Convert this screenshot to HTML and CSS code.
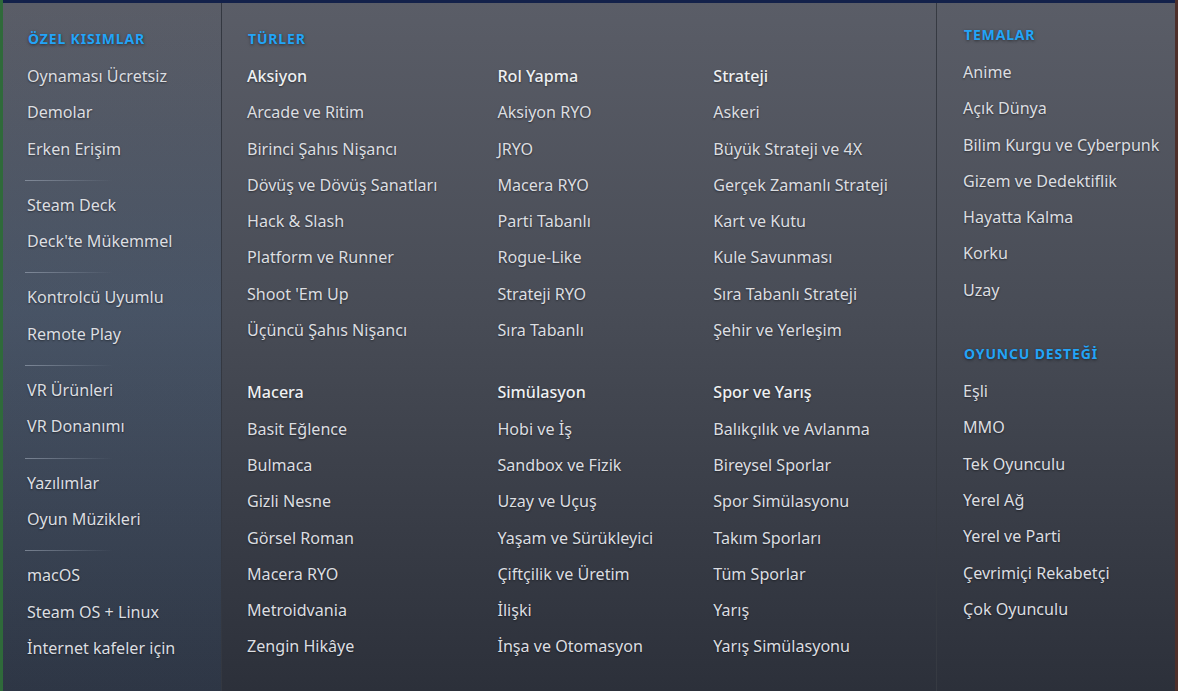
FILE: index.html
```html
<!DOCTYPE html>
<html lang="tr">
<head>
<meta charset="utf-8">
<title>Kategoriler</title>
<link rel="stylesheet" href="styles.css">
</head>
<body>
<div class="stage">
  <div class="menu">
    <div class="col col-special">
      <div class="head">Özel Kısımlar</div>
      <a class="item">Oynaması Ücretsiz</a>
      <a class="item">Demolar</a>
      <a class="item">Erken Erişim</a>
      <div class="sep"></div>
      <a class="item">Steam Deck</a>
      <a class="item">Deck'te Mükemmel</a>
      <div class="sep"></div>
      <a class="item">Kontrolcü Uyumlu</a>
      <a class="item">Remote Play</a>
      <div class="sep"></div>
      <a class="item">VR Ürünleri</a>
      <a class="item">VR Donanımı</a>
      <div class="sep"></div>
      <a class="item">Yazılımlar</a>
      <a class="item">Oyun Müzikleri</a>
      <div class="sep"></div>
      <a class="item">macOS</a>
      <a class="item">Steam OS + Linux</a>
      <a class="item">İnternet kafeler için</a>
    </div>

    <div class="col col-genres">
      <div class="head">Türler</div>
      <div class="genre-grid">
        <div class="group">
          <a class="item title">Aksiyon</a>
          <a class="item">Arcade ve Ritim</a>
          <a class="item">Birinci Şahıs Nişancı</a>
          <a class="item">Dövüş ve Dövüş Sanatları</a>
          <a class="item">Hack &amp; Slash</a>
          <a class="item">Platform ve Runner</a>
          <a class="item">Shoot 'Em Up</a>
          <a class="item">Üçüncü Şahıs Nişancı</a>
        </div>
        <div class="group">
          <a class="item title">Rol Yapma</a>
          <a class="item">Aksiyon RYO</a>
          <a class="item">JRYO</a>
          <a class="item">Macera RYO</a>
          <a class="item">Parti Tabanlı</a>
          <a class="item">Rogue-Like</a>
          <a class="item">Strateji RYO</a>
          <a class="item">Sıra Tabanlı</a>
        </div>
        <div class="group">
          <a class="item title">Strateji</a>
          <a class="item">Askeri</a>
          <a class="item">Büyük Strateji ve 4X</a>
          <a class="item">Gerçek Zamanlı Strateji</a>
          <a class="item">Kart ve Kutu</a>
          <a class="item">Kule Savunması</a>
          <a class="item">Sıra Tabanlı Strateji</a>
          <a class="item">Şehir ve Yerleşim</a>
        </div>
        <div class="group">
          <a class="item title">Macera</a>
          <a class="item">Basit Eğlence</a>
          <a class="item">Bulmaca</a>
          <a class="item">Gizli Nesne</a>
          <a class="item">Görsel Roman</a>
          <a class="item">Macera RYO</a>
          <a class="item">Metroidvania</a>
          <a class="item">Zengin Hikâye</a>
        </div>
        <div class="group">
          <a class="item title">Simülasyon</a>
          <a class="item">Hobi ve İş</a>
          <a class="item">Sandbox ve Fizik</a>
          <a class="item">Uzay ve Uçuş</a>
          <a class="item">Yaşam ve Sürükleyici</a>
          <a class="item">Çiftçilik ve Üretim</a>
          <a class="item">İlişki</a>
          <a class="item">İnşa ve Otomasyon</a>
        </div>
        <div class="group">
          <a class="item title">Spor ve Yarış</a>
          <a class="item">Balıkçılık ve Avlanma</a>
          <a class="item">Bireysel Sporlar</a>
          <a class="item">Spor Simülasyonu</a>
          <a class="item">Takım Sporları</a>
          <a class="item">Tüm Sporlar</a>
          <a class="item">Yarış</a>
          <a class="item">Yarış Simülasyonu</a>
        </div>
      </div>
    </div>

    <div class="col col-themes">
      <div class="head">Temalar</div>
      <a class="item">Anime</a>
      <a class="item">Açık Dünya</a>
      <a class="item">Bilim Kurgu ve Cyberpunk</a>
      <a class="item">Gizem ve Dedektiflik</a>
      <a class="item">Hayatta Kalma</a>
      <a class="item">Korku</a>
      <a class="item">Uzay</a>
      <div class="head head-second">Oyuncu Desteği</div>
      <a class="item">Eşli</a>
      <a class="item">MMO</a>
      <a class="item">Tek Oyunculu</a>
      <a class="item">Yerel Ağ</a>
      <a class="item">Yerel ve Parti</a>
      <a class="item">Çevrimiçi Rekabetçi</a>
      <a class="item">Çok Oyunculu</a>
    </div>
  </div>
</div>
</body>
</html>
```

FILE: styles.css
```css
* { box-sizing: border-box; }

html, body {
  margin: 0;
  height: 100%;
}

body {
  background: linear-gradient(90deg, #2f6a3a 0 3px, #13214a 3px calc(100% - 3px), #4d2f2a calc(100% - 3px));
  font-family: "Noto Sans", "Open Sans", "Liberation Sans", sans-serif;
  overflow: hidden;
}

.stage {
  padding: 3px 3px 0 3px;
  height: 100%;
}

.menu {
  display: flex;
  height: 100%;
  background: linear-gradient(180deg, #5a5d67 0%, #484c56 45%, #2c303a 100%);
}

.col {
  display: flex;
  flex-direction: column;
}

.col-special {
  width: 219px;
  padding: 26px 0 0 24px;
  background: linear-gradient(180deg, rgba(70, 110, 160, 0.00) 0%, rgba(70, 120, 175, 0.17) 45%, rgba(60, 100, 150, 0.12) 100%);
  border-right: 1px solid #343841;
}

.col-genres {
  width: 715px;
  padding: 26px 0 0 25px;
  border-right: 1px solid #363a42;
}

.col-themes {
  flex: 1;
  padding: 22px 0 0 26px;
}

.head {
  color: #23a4f7;
  font-weight: 700;
  font-size: 14px;
  line-height: 20px;
  letter-spacing: 0.06em;
  text-transform: uppercase;
  text-shadow: 0 1px 3px rgba(0, 0, 0, 0.5);
  margin: 0 0 9px 1px;
}

.head-second {
  margin-top: 36px;
}

.item {
  display: block;
  color: #dcdee1;
  font-size: 16.1px;
  line-height: 36.3px;
  height: 36.3px;
  white-space: nowrap;
  text-shadow: 0 1px 2px rgba(0, 0, 0, 0.45);
}

.item.title {
  color: #eef0f2;
  font-weight: 500;
}

.sep {
  width: 88px;
  height: 1px;
  margin: 13px 0 6px -2px;
  background: linear-gradient(90deg, rgba(170, 180, 195, 0.55), rgba(170, 180, 195, 0));
}

.genre-grid {
  display: grid;
  grid-template-columns: auto auto auto;
  justify-content: start;
  column-gap: 60px;
  row-gap: 26px;
}
```
